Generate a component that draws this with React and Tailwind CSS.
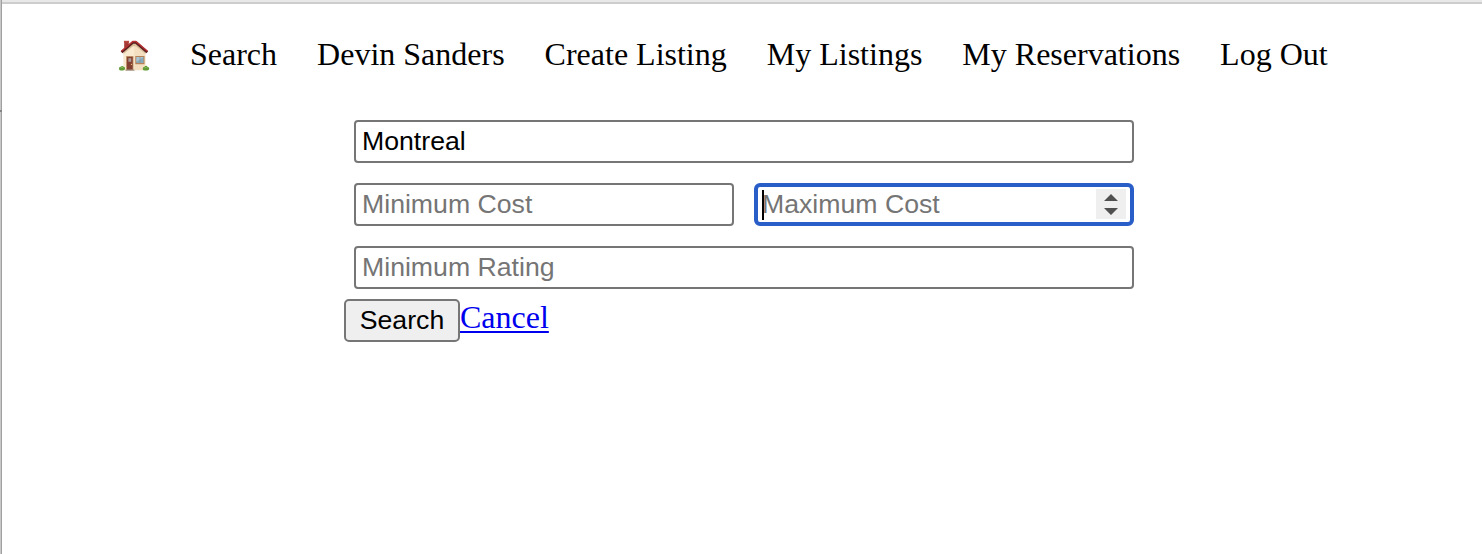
import React from "react";

function House() {
  return (
    <svg viewBox="0 0 32 34" className="block h-[34px] w-8" role="img" aria-label="Home">
      <path d="M6.200 3.200H10.800V12H6.200Z" fill="#a33a35" />
      <path d="M5.900 2.800H11.100V4.600H5.900Z" fill="#b9483f" />
      <path d="M5.500 13.500 16.300 4.500 27.500 13.500V32.300H5.500Z" fill="#f3dfbf" />
      <path d="M6 13.500 16.300 5.500V32H6Z" fill="#f8e9cf" />
      <path d="M5.500 13.500 15 5H18L27.500 13.500V16L18 8.200H15L5.500 16Z" fill="#d9bf9a" />
      <path d="M3.500 14.200 14.800 4.500H18L29.300 14.200" fill="none" stroke="#5c1f20" strokeWidth="2.600" strokeLinejoin="round" />
      <path d="M3.300 13.300 14.800 3.500H18L29.500 13.300" fill="none" stroke="#bd3334" strokeWidth="1.300" strokeLinejoin="round" />
      <path d="M8 18H15.500V32H8Z" fill="#c79d72" />
      <path d="M8.900 18.800H14.700V32H8.900Z" fill="#844030" />
      <path d="M10.400 20.200H13.200V23.800H10.400Z" fill="#a99c96" />
      <circle cx="13.500" cy="26.400" r="0.650" fill="#e3bc66" />
      <path d="M17.300 18H26.500V26.200H17.300Z" fill="#b58258" />
      <path d="M18.400 19H25.500V25H18.400Z" fill="#86aabd" />
      <path d="M18.400 19H25.500L18.400 24Z" fill="#aac6d3" />
      <path d="M22 19V25" stroke="#93847a" strokeWidth="0.600" />
      <path d="M7.500 31.500H16.500V32.800H7.500Z" fill="#a99b8b" />
      <path d="M1 31Q0.700 28.800 2.700 28.800Q4.300 27.300 5.600 28.800Q7.600 29.200 7 31Q6.600 32.700 4.200 32.400Q1.300 33 1 31Z" fill="#5f9a35" />
      <path d="M24.700 31Q24.500 29 26.500 28.700Q28.300 27 29.500 28.700Q31.500 29 31.200 31Q31 32.800 28.300 32.400Q25.200 33 24.700 31Z" fill="#5f9a35" />
      <path d="M2.500 30Q4 28.500 5.500 30M26.300 30Q28.200 28.300 29.800 30" fill="none" stroke="#86bb59" strokeWidth="0.900" />
    </svg>
  );
}

const links = ["Search", "Devin Sanders", "Create Listing", "My Listings", "My Reservations", "Log Out"];
const field =
  "block h-[43px] w-full rounded-[4px] border-2 border-[#767676] bg-white px-1.5 pb-px pt-0 text-[26.667px] leading-[30px] text-black outline-none placeholder:text-[#757575] placeholder:opacity-100";

export default function App() {
  return (
    <div className="flex h-[554px] w-full overflow-hidden bg-white font-['Liberation_Serif',serif] text-[32px] leading-9 text-black">
      <div className="flex w-0.5 shrink-0 flex-col border-r border-[#a0a0a0] bg-[#c8c8c8]">
        <div className="mt-[110px] h-0.5 w-0.5 shrink-0 bg-[#858585]" />
      </div>
      <div className="min-w-0 flex-1">
        <div className="h-1 border-b-2 border-[#cdcdcd] bg-[#e8e8e8]" />
        <nav className="flex h-[100px] items-center gap-10 whitespace-nowrap pl-[116px]">
          <a href="#home" className="mt-0.5 w-8 shrink-0"><House /></a>
          {links.map((label) => (
            <a key={label} href="#nav">{label}</a>
          ))}
        </nav>
        <form className="ml-[342px] mt-1.5 w-[800px] font-['Liberation_Sans',sans-serif]" onSubmit={(e) => e.preventDefault()}>
          <div className="grid grid-cols-2 gap-5 p-2.5">
            <input className={`${field} col-span-2`} defaultValue="Montreal" aria-label="City" />
            <input className={field} placeholder="Minimum Cost" />
            <div className="relative flex h-[43px] items-center rounded-[6px] border-4 border-[#295dc7] bg-white pl-1 pr-1">
              <input
                className="h-[30px] min-w-0 flex-1 -translate-y-px bg-white text-[26.667px] leading-[30px] outline-none placeholder:text-[#757575] placeholder:opacity-100"
                placeholder="Maximum Cost"
              />
              <span className="absolute left-1 top-[3px] h-[30px] w-0.5 bg-black" />
              <span className="-mt-px flex h-[30px] w-[30px] items-center justify-center bg-[#efefef]">
                <svg viewBox="0 0 30 30" className="h-[30px] w-[30px]" aria-hidden="true">
                  <path d="M8 12 15 5 22 12ZM8 19H22L15 26Z" fill="#505050" />
                </svg>
              </span>
            </div>
            <input className={`${field} col-span-2`} placeholder="Minimum Rating" />
          </div>
          <div className="flex items-start">
            <button className="h-[43px] w-[116px] rounded-[5px] border-2 border-[#767676] bg-[#efefef] pb-px text-[26.667px] leading-[30px]">Search</button>
            <a href="#cancel" className="font-['Liberation_Serif',serif] text-[#0000ee] underline decoration-2 underline-offset-[3px]">Cancel</a>
          </div>
        </form>
      </div>
    </div>
  );
}
